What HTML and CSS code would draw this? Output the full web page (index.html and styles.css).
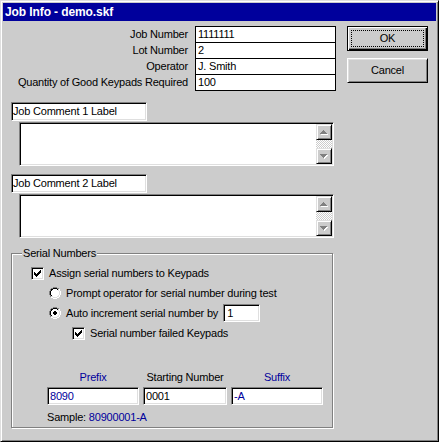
FILE: index.html
```html
<!DOCTYPE html>
<html>
<head>
    <title>Job Info - demo.skf</title>
    <meta charset="UTF-8">
    <link rel="stylesheet" href="styles.css">
</head>
<body>
<div class="window">
    <div class="titlebar">Job Info - demo.skf</div>

    <div class="dialog">
        <div class="main">
            <div class="fields">
                <div class="label">Job Number</div><div class="field">1111111</div>
                <div class="label">Lot Number</div><div class="field">2</div>
                <div class="label">Operator</div><div class="field">J. Smith</div>
                <div class="label">Quantity of Good Keypads Required</div><div class="field">100</div>
            </div>

            <div class="edit comment-label">Job Comment 1 Label</div>
            <div class="edit memo">
                <div class="scrollbar">
                    <div class="sb-btn">
                        <svg width="8" height="5" viewBox="0 0 8 5" shape-rendering="crispEdges">
                            <path d="M4 1h1v1H4z M3 2h3v1H3z M2 3h5v1H2z M1 4h7v1H1z" fill="#fff"/>
                            <path d="M3 0h1v1H3z M2 1h3v1H2z M1 2h5v1H1z M0 3h7v1H0z" fill="#808080"/>
                        </svg>
                    </div>
                    <div class="sb-track"></div>
                    <div class="sb-btn">
                        <svg width="8" height="5" viewBox="0 0 8 5" shape-rendering="crispEdges">
                            <path d="M1 1h7v1H1z M2 2h5v1H2z M3 3h3v1H3z M4 4h1v1H4z" fill="#fff"/>
                            <path d="M0 0h7v1H0z M1 1h5v1H1z M2 2h3v1H2z M3 3h1v1H3z" fill="#808080"/>
                        </svg>
                    </div>
                </div>
            </div>

            <div class="edit comment-label next">Job Comment 2 Label</div>
            <div class="edit memo">
                <div class="scrollbar">
                    <div class="sb-btn">
                        <svg width="8" height="5" viewBox="0 0 8 5" shape-rendering="crispEdges">
                            <path d="M4 1h1v1H4z M3 2h3v1H3z M2 3h5v1H2z M1 4h7v1H1z" fill="#fff"/>
                            <path d="M3 0h1v1H3z M2 1h3v1H2z M1 2h5v1H1z M0 3h7v1H0z" fill="#808080"/>
                        </svg>
                    </div>
                    <div class="sb-track"></div>
                    <div class="sb-btn">
                        <svg width="8" height="5" viewBox="0 0 8 5" shape-rendering="crispEdges">
                            <path d="M1 1h7v1H1z M2 2h5v1H2z M3 3h3v1H3z M4 4h1v1H4z" fill="#fff"/>
                            <path d="M0 0h7v1H0z M1 1h5v1H1z M2 2h3v1H2z M3 3h1v1H3z" fill="#808080"/>
                        </svg>
                    </div>
                </div>
            </div>

            <div class="group">
                <span class="legend">Serial Numbers</span>

                <div class="opt">
                    <span class="checkbox">
                        <svg width="7" height="7" viewBox="0 0 7 7" shape-rendering="crispEdges">
                            <path d="M0 2h1v3H0z M1 3h1v3H1z M2 4h1v3H2z M3 3h1v3H3z M4 2h1v3H4z M5 1h1v3H5z M6 0h1v3H6z" fill="#000"/>
                        </svg>
                    </span>
                    <span>Assign serial numbers to Keypads</span>
                </div>

                <div class="opt indent-1">
                    <svg class="radio" width="12" height="12" viewBox="0 0 12 12" shape-rendering="crispEdges">
                        <path d="M4 2h4v1H4z M3 3h6v1H3z M2 4h8v4H2z M3 8h6v1H3z M4 9h4v1H4z" fill="#fff"/>
                        <path d="M4 0h4v1H4z M2 1h2v1H2z M8 1h2v1H8z M1 2h1v2H1z M0 4h1v4H0z M1 8h1v2H1z" fill="#808080"/>
                        <path d="M10 2h1v2h-1z M11 4h1v4h-1z M10 8h1v2h-1z M2 10h2v1H2z M8 10h2v1H8z M4 11h4v1H4z" fill="#fff"/>
                        <path d="M4 1h4v1H4z M2 2h2v1H2z M8 2h1v1H8z M2 3h1v1H2z M1 4h1v4H1z M2 8h1v1H2z" fill="#000"/>
                        <path d="M9 2h1v2H9z M10 4h1v4h-1z M9 8h1v1H9z M2 9h2v1H2z M8 9h2v1H8z M4 10h4v1H4z" fill="#dfdfdf"/>
                    </svg>
                    <span>Prompt operator for serial number during test</span>
                </div>

                <div class="opt indent-1">
                    <svg class="radio" width="12" height="12" viewBox="0 0 12 12" shape-rendering="crispEdges">
                        <path d="M4 2h4v1H4z M3 3h6v1H3z M2 4h8v4H2z M3 8h6v1H3z M4 9h4v1H4z" fill="#fff"/>
                        <path d="M4 0h4v1H4z M2 1h2v1H2z M8 1h2v1H8z M1 2h1v2H1z M0 4h1v4H0z M1 8h1v2H1z" fill="#808080"/>
                        <path d="M10 2h1v2h-1z M11 4h1v4h-1z M10 8h1v2h-1z M2 10h2v1H2z M8 10h2v1H8z M4 11h4v1H4z" fill="#fff"/>
                        <path d="M4 1h4v1H4z M2 2h2v1H2z M8 2h1v1H8z M2 3h1v1H2z M1 4h1v4H1z M2 8h1v1H2z" fill="#000"/>
                        <path d="M9 2h1v2H9z M10 4h1v4h-1z M9 8h1v1H9z M2 9h2v1H2z M8 9h2v1H8z M4 10h4v1H4z" fill="#dfdfdf"/>
                        <path d="M5 4h2v1H5z M4 5h4v2H4z M5 7h2v1H5z" fill="#000"/>
                    </svg>
                    <span>Auto increment serial number by</span>
                    <div class="edit step">1</div>
                </div>

                <div class="opt indent-2">
                    <span class="checkbox">
                        <svg width="7" height="7" viewBox="0 0 7 7" shape-rendering="crispEdges">
                            <path d="M0 2h1v3H0z M1 3h1v3H1z M2 4h1v3H2z M3 3h1v3H3z M4 2h1v3H4z M5 1h1v3H5z M6 0h1v3H6z" fill="#000"/>
                        </svg>
                    </span>
                    <span>Serial number failed Keypads</span>
                </div>

                <div class="serial">
                    <div class="col-head blue">Prefix</div>
                    <div class="col-head">Starting Number</div>
                    <div class="col-head blue">Suffix</div>
                    <div class="edit part blue">8090</div>
                    <div class="edit part">0001</div>
                    <div class="edit part blue">-A</div>
                </div>
                <div class="sample">Sample: <span class="blue">80900001-A</span></div>
            </div>
        </div>

        <div class="buttons">
            <button class="btn default">OK</button>
            <button class="btn">Cancel</button>
        </div>
    </div>
</div>
</body>
</html>
```

FILE: styles.css
```css
body {
    margin: 0;
    font-family: "Liberation Sans", Arial, sans-serif;
    font-size: 11px;
    line-height: 13px;
    letter-spacing: -0.2px;
    color: #000;
    background: #cccccc;
}

.window {
    width: 439px;
    height: 442px;
    box-sizing: border-box;
    background: #cccccc;
    border: 1px solid;
    border-color: #dfdfdf #000 #000 #dfdfdf;
    box-shadow: inset 1px 1px #fff, inset -1px -1px #808080;
    padding: 2px;
}

.titlebar {
    height: 18px;
    line-height: 18px;
    background: #00009c;
    color: white;
    font-weight: bold;
    font-size: 12px;
    letter-spacing: -0.1px;
    padding-left: 2px;
}

.dialog {
    display: flex;
    gap: 11px;
    padding: 5px 0 0 8px;
}

.main {
    width: 325px;
}

/* top block: label / value pairs */
.fields {
    display: grid;
    grid-template-columns: 177px 141px;
    grid-auto-rows: 16px;
    column-gap: 7px;
}

.label {
    text-align: right;
    line-height: 17px;
    white-space: nowrap;
}

.field {
    height: 17px;
    box-sizing: border-box;
    border: 1px solid #000;
    background: #fff;
    padding: 0 2px;
    line-height: 15px;
}

/* sunken edit look */
.edit {
    box-sizing: border-box;
    background: #fff;
    border: 1px solid;
    border-color: #808080 #fff #fff #808080;
    box-shadow: inset 1px 1px #000, inset -1px -1px #dfdfdf;
}

.comment-label {
    width: 136px;
    height: 19px;
    margin-top: 12px;
    padding-left: 1px;
    line-height: 17px;
}

.comment-label.next {
    margin-top: 8px;
}

.memo {
    width: 315px;
    height: 44px;
    margin: 1px 0 0 8px;
    padding: 1px;
    display: flex;
    justify-content: flex-end;
}

.scrollbar {
    width: 16px;
    display: flex;
    flex-direction: column;
}

.sb-btn {
    height: 16px;
    box-sizing: border-box;
    background: #cccccc;
    border: 1px solid;
    border-color: #dfdfdf #000 #000 #dfdfdf;
    box-shadow: inset 1px 1px #fff, inset -1px -1px #808080;
    display: flex;
    align-items: center;
    justify-content: center;
}

.sb-track {
    flex: 1;
    background: repeating-conic-gradient(#fff 0 25%, #cccccc 0 50%) 0 0 / 2px 2px;
}

/* Serial Numbers group box */
.group {
    position: relative;
    width: 322px;
    box-sizing: border-box;
    margin-top: 15px;
    border: 1px solid #808080;
    box-shadow: inset 1px 1px #fff, 1px 1px #fff;
    padding: 9px 0 3px 19px;
}

.legend {
    position: absolute;
    left: 10px;
    top: -7px;
    padding: 0 1px;
    background: #cccccc;
}

.opt {
    display: flex;
    align-items: center;
    gap: 5px;
    height: 20px;
    white-space: nowrap;
}

.indent-1 {
    margin-left: 18px;
}

.indent-2 {
    margin-left: 41px;
}

.checkbox {
    width: 13px;
    height: 13px;
    box-sizing: border-box;
    padding: 2px;
    display: flex;
    background: #fff;
    border: 1px solid;
    border-color: #808080 #fff #fff #808080;
    box-shadow: inset 1px 1px #000, inset -1px -1px #dfdfdf;
}

.radio {
    flex: none;
}

.step {
    width: 37px;
    height: 18px;
    padding-left: 3px;
    line-height: 16px;
}

.serial {
    display: grid;
    grid-template-columns: 92px 84px 92px;
    column-gap: 4px;
    margin: 28px 0 0 16px;
}

.col-head {
    text-align: center;
}

.part {
    height: 18px;
    margin-top: 3px;
    padding-left: 2px;
    line-height: 16px;
}

.sample {
    margin: 6px 0 0 16px;
}

.blue {
    color: #00009c;
}

/* push buttons */
.buttons {
    display: flex;
    flex-direction: column;
    gap: 7px;
}

.btn {
    width: 81px;
    height: 25px;
    box-sizing: border-box;
    padding: 0;
    font: inherit;
    letter-spacing: inherit;
    color: #000;
    background: #cccccc;
    border: 1px solid;
    border-color: #fff #000 #000 #fff;
    box-shadow: inset 1px 1px #dfdfdf, inset -1px -1px #808080;
}

.btn.default {
    border-color: #000;
    box-shadow: inset 1px 1px #fff, inset -1px -1px #000, inset -2px -2px #808080;
    outline: 1px dotted #000;
    outline-offset: -5px;
}
```
